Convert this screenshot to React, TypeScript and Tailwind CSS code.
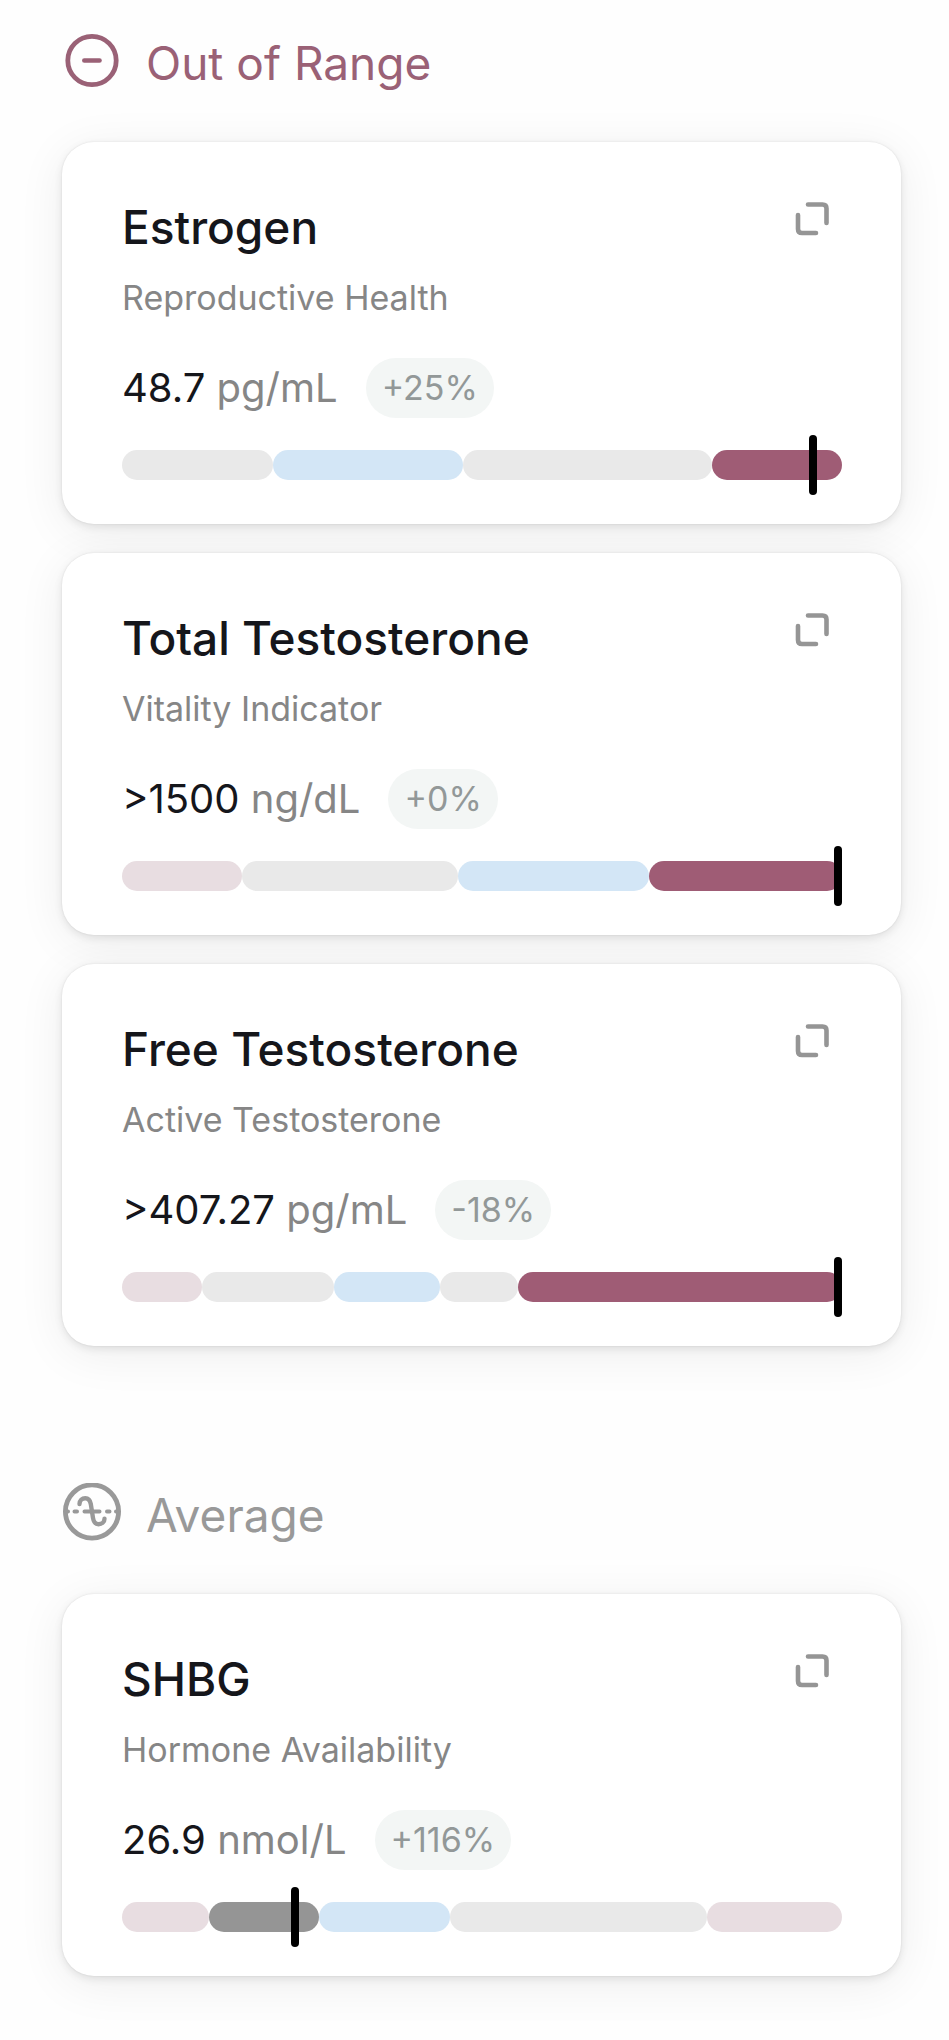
import React from "react";
import clsx from "clsx";

type Tone = "normal" | "optimal" | "low" | "out" | "average";

type Marker = {
  name: string;
  category: string;
  value: string;
  unit: string;
  change: string;
  segments: { tone: Tone; size: number }[];
  position: number;
};

const tones: Record<Tone, string> = {
  normal: "bg-[#e9e9e9]",
  optimal: "bg-[#d3e6f6]",
  low: "bg-[#e8dde1]",
  out: "bg-[#9f5c75]",
  average: "bg-[#959595]",
};

const outOfRange: Marker[] = [
  {
    name: "Estrogen",
    category: "Reproductive Health",
    value: "48.7",
    unit: "pg/mL",
    change: "+25%",
    segments: [
      { tone: "normal", size: 151 },
      { tone: "optimal", size: 190 },
      { tone: "normal", size: 249 },
      { tone: "out", size: 130 },
    ],
    position: 96,
  },
  {
    name: "Total Testosterone",
    category: "Vitality Indicator",
    value: ">1500",
    unit: "ng/dL",
    change: "+0%",
    segments: [
      { tone: "low", size: 120 },
      { tone: "normal", size: 216 },
      { tone: "optimal", size: 191 },
      { tone: "out", size: 193 },
    ],
    position: 99.5,
  },
  {
    name: "Free Testosterone",
    category: "Active Testosterone",
    value: ">407.27",
    unit: "pg/mL",
    change: "-18%",
    segments: [
      { tone: "low", size: 80 },
      { tone: "normal", size: 132 },
      { tone: "optimal", size: 106 },
      { tone: "normal", size: 78 },
      { tone: "out", size: 324 },
    ],
    position: 99.5,
  },
];

const average: Marker[] = [
  {
    name: "SHBG",
    category: "Hormone Availability",
    value: "26.9",
    unit: "nmol/L",
    change: "+116%",
    segments: [
      { tone: "low", size: 87 },
      { tone: "average", size: 110 },
      { tone: "optimal", size: 131 },
      { tone: "normal", size: 257 },
      { tone: "low", size: 135 },
    ],
    position: 24,
  },
];

function MinusCircle() {
  return (
    <svg
      viewBox="0 0 60 60"
      fill="none"
      stroke="currentColor"
      strokeLinecap="round"
      className="w-15 h-15 shrink-0"
      aria-hidden="true"
    >
      <circle cx="30" cy="29.5" r="24.2" strokeWidth="4.8" />
      <path d="M22.3 29.5h15.2" strokeWidth="4.6" />
    </svg>
  );
}

function WaveCircle() {
  return (
    <svg
      viewBox="0 0 60 60"
      fill="none"
      stroke="currentColor"
      strokeLinecap="round"
      className="w-15 h-15 shrink-0"
      aria-hidden="true"
    >
      <circle cx="30" cy="28.5" r="26.6" strokeWidth="4.8" />
      <path
        d="M17.5 21C17.5 17.5 20 15.2 23.3 15.2C26.8 15.2 28.2 17.700 28.800 21L31 35C31.6 38.500 33.200 41.2 36.5 41.2C39.800 41.2 42.5 39 42.5 35.700"
        strokeWidth="4.4"
      />
      <path
        d="M4 28.5h2M12.5 28.5h2.5M22.5 28.5h15M45 28.5h2.5M54 28.5h2"
        strokeWidth="4"
      />
    </svg>
  );
}

function ExpandIcon() {
  return (
    <svg
      viewBox="0 0 36 36"
      fill="none"
      stroke="currentColor"
      strokeWidth="4.6"
      strokeLinecap="round"
      className="w-9 h-9"
      aria-hidden="true"
    >
      <path d="M14 4.5h14.5q4 0 4 4v14.5" />
      <path d="M4 15v14q0 4 4 4h14" />
    </svg>
  );
}

function RangeBar({ segments, position }: Pick<Marker, "segments" | "position">) {
  return (
    <div className="relative mt-8 flex h-[30px]">
      {segments.map((s, i) => (
        <div
          key={i}
          className={clsx("h-full rounded-full basis-0", tones[s.tone])}
          style={{ flexGrow: s.size }}
        />
      ))}
      <div
        className="absolute -top-[15px] h-15 w-2 -translate-x-1/2 rounded-full bg-black"
        style={{ left: `${position}%` }}
      />
    </div>
  );
}

function MarkerCard({ marker }: { marker: Marker }) {
  return (
    <article className="rounded-[32px] bg-white pt-[58px] pr-[59px] pb-11 pl-[60px] shadow-[0_0_2px_rgba(0,0,0,0.10),0_3px_8px_rgba(0,0,0,0.09),0_8px_48px_rgba(0,0,0,0.07)]">
      <div className="flex items-start justify-between">
        <h3 className="text-[46px] font-medium leading-[54px] text-[#15161b]">
          {marker.name}
        </h3>
        <button
          type="button"
          aria-label={`Expand ${marker.name}`}
          className="mr-3 text-[#959595]"
        >
          <ExpandIcon />
        </button>
      </div>
      <p className="mt-[22px] text-[34px] leading-11 text-[#868686]">
        {marker.category}
      </p>
      <div className="mt-[38px] flex items-center gap-7">
        <p className="text-[40px] leading-15 text-[#868686]">
          <span className="text-[#15161b]">{marker.value}</span> {marker.unit}
        </p>
        <span className="rounded-full bg-[#f3f6f5] px-4 text-[34px] leading-15 text-[#929898]">
          {marker.change}
        </span>
      </div>
      <RangeBar segments={marker.segments} position={marker.position} />
    </article>
  );
}

function Section({
  title,
  icon,
  className,
  markers,
}: {
  title: string;
  icon: React.ReactNode;
  className: string;
  markers: Marker[];
}) {
  return (
    <section>
      <div className={clsx("flex items-start gap-6", className)}>
        {icon}
        <h2 className="text-[46px] leading-16">{title}</h2>
      </div>
      <div className="mt-[47px] flex flex-col gap-[29px]">
        {markers.map((m) => (
          <MarkerCard key={m.name} marker={m} />
        ))}
      </div>
    </section>
  );
}

export default function App() {
  return (
    <main className="flex min-h-screen flex-col gap-[137px] bg-[#fefefe] pt-[31px] pr-12 pb-16 pl-[62px] font-['Inter',sans-serif]">
      <Section
        title="Out of Range"
        icon={<MinusCircle />}
        className="text-[#9a6176]"
        markers={outOfRange}
      />
      <Section
        title="Average"
        icon={<WaveCircle />}
        className="text-[#999999]"
        markers={average}
      />
    </main>
  );
}
